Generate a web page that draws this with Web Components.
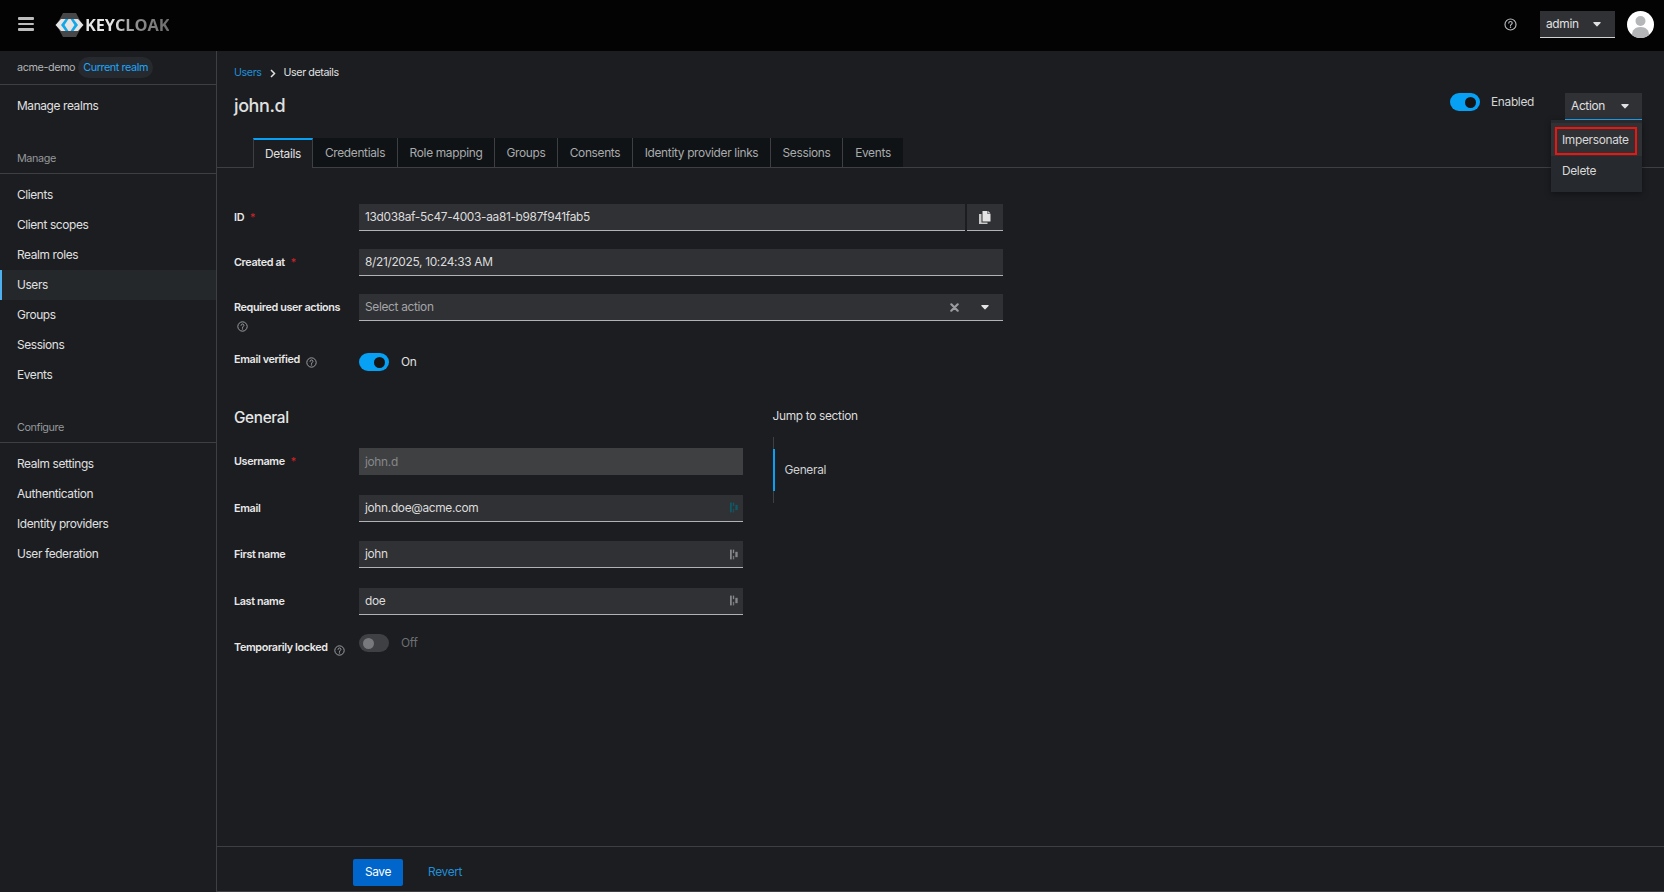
<!DOCTYPE html>
<html lang="en"><head><meta charset="utf-8"><title>Keycloak</title>
<style>
html,body{margin:0;height:892px;overflow:hidden;background:#1b1d21;color:#e0e0e0;font:11.9px/18px Inter,"Noto Sans",sans-serif;letter-spacing:-.32px}
</style></head><body>
<kc-app>
  <kc-header slot="header"></kc-header>
  <kc-sidebar slot="side">
    <kc-realm name="acme-demo" tag="Current realm"></kc-realm>
    <kc-nav-item first>Manage realms</kc-nav-item>
    <kc-nav-group title="Manage">
      <kc-nav-item>Clients</kc-nav-item><kc-nav-item>Client scopes</kc-nav-item><kc-nav-item>Realm roles</kc-nav-item>
      <kc-nav-item active>Users</kc-nav-item><kc-nav-item>Groups</kc-nav-item><kc-nav-item>Sessions</kc-nav-item><kc-nav-item>Events</kc-nav-item>
    </kc-nav-group>
    <kc-nav-group title="Configure">
      <kc-nav-item>Realm settings</kc-nav-item><kc-nav-item>Authentication</kc-nav-item><kc-nav-item>Identity providers</kc-nav-item><kc-nav-item>User federation</kc-nav-item>
    </kc-nav-group>
  </kc-sidebar>
  <kc-page slot="main">
    <kc-page-head></kc-page-head>
    <kc-tabs>
      <kc-tab active>Details</kc-tab><kc-tab w="85">Credentials</kc-tab><kc-tab w="97">Role mapping</kc-tab><kc-tab w="63">Groups</kc-tab><kc-tab w="75">Consents</kc-tab><kc-tab w="138">Identity provider links</kc-tab><kc-tab w="72">Sessions</kc-tab><kc-tab w="60">Events</kc-tab>
    </kc-tabs>
    <kc-form>
      <kc-field label="ID" req><kc-input value="13d038af-5c47-4003-aa81-b987f941fab5" copy></kc-input></kc-field>
      <kc-field label="Created at" req><kc-input value="8/21/2025, 10:24:33 AM"></kc-input></kc-field>
      <kc-field label="Required user actions" wraphelp h="41"><kc-input value="Select action" placeholder select></kc-input></kc-field>
      <kc-field label="Email verified" help switch><kc-switch on text="On"></kc-switch></kc-field>
      <kc-general>
        <kc-section-title>General</kc-section-title>
        <kc-field small label="Username" req><kc-input value="john.d" disabled></kc-input></kc-field>
        <kc-field small label="Email"><kc-input value="john.doe@acme.com" pm="teal"></kc-input></kc-field>
        <kc-field small label="First name"><kc-input value="john" pm="grey"></kc-input></kc-field>
        <kc-field small label="Last name"><kc-input value="doe" pm="grey"></kc-input></kc-field>
        <kc-field small label="Temporarily locked" help switch low><kc-switch text="Off"></kc-switch></kc-field>
        <kc-jump slot="aside" label="Jump to section" item="General"></kc-jump>
      </kc-general>
    </kc-form>
    <kc-footer></kc-footer>
  </kc-page>
</kc-app>
<script>
const ICON={
 help:s=>`<svg width="${s}" height="${s}" viewBox="0 0 16 16" fill="none" aria-hidden="true"><circle cx="8" cy="8" r="6.8" stroke="currentColor" stroke-width="1.4"/><path d="M5.9 6.3c0-1.2 1-2 2.1-2s2.1.8 2.1 1.9c0 1.7-2.1 1.6-2.1 3.3" stroke="currentColor" stroke-width="1.4" stroke-linecap="round"/><circle cx="8" cy="11.5" r=".95" fill="currentColor"/></svg>`,
 caret:()=>`<svg width="8" height="5" viewBox="0 0 9 6" aria-hidden="true"><path d="M0 .8C0 .3.3 0 .8 0h7.4c.5 0 .8.3.8.8 0 .2-.1.4-.2.5L5 5.2c-.3.3-.7.3-1 0L.2 1.3C.1 1.2 0 1 0 .8z" fill="currentColor"/></svg>`
};
function def(name,render){
  customElements.define(name,class extends HTMLElement{
    connectedCallback(){ if(this.shadowRoot) return; const r=this.attachShadow({mode:'open'}); r.innerHTML=render(this); }
  });
}
def('kc-app',()=>`<style>:host{display:flex;flex-direction:column;height:892px}
 .b{display:flex;flex:1;min-height:0}</style><slot name="header"></slot><div class="b"><slot name="side"></slot><slot name="main"></slot></div>`);
def('kc-header',()=>`<style>:host{display:flex;align-items:center;height:51px;background:#030303;padding:0 10px 0 18px;flex:none;box-sizing:border-box}
 .burger{display:flex;flex-direction:column;gap:3.2px;width:16px;margin-top:-3px}.burger i{display:block;height:2.6px;background:#bdbdbd;border-radius:1px}
 .logo{margin-left:21px;display:flex;align-items:center;margin-top:-2px}
 .t{font:700 16.400px/20px "Open Sans",sans-serif;margin-left:1px;letter-spacing:-.1px;background:linear-gradient(90deg,#e6e6e6 0 32%,#8f8f8f 60%,#6d6d6d);-webkit-background-clip:text;background-clip:text;color:transparent}
 .sp{flex:1}.help{color:#b8bbbe;display:flex;margin-right:23px;margin-top:-3px}
 .user{width:75px;height:27px;box-sizing:border-box;background:#303135;border-bottom:1px solid #d2d2d2;display:flex;align-items:center;padding:0 10px 0 6px;justify-content:space-between;margin-top:-2px;color:#e0e0e0}
 .user span{margin-right:auto}.user svg{margin-right:4px;color:#e0e0e0}
 .av{margin-left:12px;margin-top:-3px;display:flex}</style>
 <div class="burger"><i></i><i></i><i></i></div>
 <div class="logo"><svg width="29" height="24" viewBox="0 0 29 24" aria-hidden="true"><path d="M8 0h13l6.500 12L21 24H8L1.500 12z" fill="#47474a"/><path d="M6 6h17l5.500 6-5.500 6H6L.5 12z" fill="#e4e4e4"/><path d="M10.500 6 6 12l4.500 6h3L9.500 12l4-6zM18.500 6h-3l4 6-4 6h3L23 12z" fill="#12a7e8"/></svg><span class="t">KEYCLOAK</span></div>
 <div class="sp"></div><span class="help">${ICON.help(13)}</span>
 <div class="user"><span>admin</span>${ICON.caret()}</div>
 <div class="av"><svg width="27" height="27" viewBox="0 0 27 27" aria-hidden="true"><circle cx="13.500" cy="13.500" r="13.500" fill="#fff"/><circle cx="13.500" cy="10" r="5" fill="#b4b6b8"/><path d="M5 24c0-5 3-8 8.500-8S22 19 22 24c-2.300 2-5 3-8.500 3S7.300 26 5 24z" fill="#b4b6b8"/></svg></div>`);
def('kc-sidebar',()=>`<style>:host{display:block;width:217px;flex:none;box-sizing:border-box;border-right:1px solid #3d3f43;background:#1b1d21}</style><slot></slot>`);
def('kc-realm',e=>`<style>:host{display:flex;align-items:center;height:33px;box-sizing:content-box;border-bottom:1px solid #3d3f43;padding-left:17px;font-size:10.800px;letter-spacing:-.4px;color:#b3b5b7}
 b{font-weight:400;color:#1fa7f8;background:#26292e;border-radius:11px;padding:0 5px;margin-left:3px;height:21px;line-height:21px;white-space:nowrap}</style>${e.getAttribute('name')}<b>${e.getAttribute('tag')}</b>`);
def('kc-nav-item',e=>`<style>:host{display:flex;align-items:center;height:30px;padding-left:17px;box-sizing:border-box;color:#e0e0e0;letter-spacing:-.38px;position:relative;${e.hasAttribute('first')?'margin-top:6px;':''}${e.hasAttribute('active')?'background:#24282b;':''}}
 i{position:absolute;left:0;top:0;bottom:0;width:2px;background:#4fb0f0}</style>${e.hasAttribute('active')?'<i></i>':''}<slot></slot>`);
def('kc-nav-group',e=>`<style>:host{display:block;margin-top:22px}.h{height:30px;line-height:32px;padding-left:17px;border-bottom:1px solid #3d3f43;margin-bottom:6px;font-size:10.800px;letter-spacing:-.4px;color:#96989a}</style><div class="h">${e.getAttribute('title')}</div><slot></slot>`);
def('kc-page',()=>`<style>:host{display:flex;flex-direction:column;flex:1;min-width:0;position:relative}</style><slot></slot>`);
def('kc-page-head',()=>`<style>:host{display:block;padding:13px 22px 0 17px;flex:none}
 .bc{height:18px;font-size:10.700px;letter-spacing:-.4px;display:flex;align-items:center;color:#e0e0e0}.bc a{color:#1f8fd8}.bc svg{margin:0 8px 0 8px;color:#e0e0e0}
 .row{display:flex;margin-top:11px;height:27px}h1{margin:-1px 0 0;font:500 18px/27px Inter,sans-serif;letter-spacing:-.4px;color:#e0e0e0;flex:1}
 .en{display:flex;height:18px;margin-right:31px;align-items:center}.en span{margin-left:11px;color:#d4d5d6;}</style>
 <div class="bc"><a>Users</a><svg width="6" height="9" viewBox="0 0 6 9" fill="none" aria-hidden="true"><path d="M1 1l3.500 3.500L1 8" stroke="currentColor" stroke-width="1.500"/></svg>User details</div>
 <div class="row"><h1>john.d</h1><div class="en"><kc-switch on></kc-switch><span>Enabled</span></div><kc-dropdown label="Action"></kc-dropdown></div>`);
def('kc-dropdown',e=>`<style>:host{display:block;position:relative;width:77px}
 .b{height:27px;box-sizing:border-box;background:#303135;border-bottom:1px solid #1fa7f8;display:flex;align-items:center;padding:0 13px 0 6px;justify-content:space-between;color:#e0e0e0}
 .m{position:absolute;right:0;top:27px;width:91px;height:72px;box-sizing:border-box;background:#26292d;box-shadow:0 2px 6px #0006;z-index:5;padding:3px 0;}
 .i{height:26px;display:flex;align-items:center;padding-left:11px;color:#d8d8d8}
 .i.s{background:#303135;position:relative;height:33px;padding-top:1px;box-sizing:border-box}.i.s::after{content:"";position:absolute;left:4px;right:5px;top:4px;bottom:1px;border:2.500px solid #ee1410;box-sizing:border-box}
 .i+.i{margin-top:2px}</style>
 <div class="b"><span>${e.getAttribute('label')}</span>${ICON.caret()}</div>
 <div class="m"><div class="i s">Impersonate</div><div class="i">Delete</div></div>`);
def('kc-switch',e=>{const on=e.hasAttribute('on'),t=e.getAttribute('text');return `<style>:host{display:inline-flex;align-items:center}
 .t{width:30px;height:18px;border-radius:9px;background:${on?'#06a0f5':'#3e4043'};position:relative;flex:none}
 .k{position:absolute;top:3.500px;${on?'right:4px;background:#151515;':'left:4px;background:#77797c;'}width:11px;height:11px;border-radius:50%}
 span{margin-left:12px;color:${on?'#e0e0e0':'#6d6f72'};position:relative}</style><div class="t"><div class="k"></div></div>${t?`<span>${t}</span>`:''}`});
def('kc-tabs',()=>`<style>:host{display:flex;margin-top:18px;height:30px;box-sizing:border-box;border-bottom:1px solid #3d3f43;padding-left:36px;flex:none}</style><slot></slot>`);
def('kc-tab',e=>{const a=e.hasAttribute('active');return `<style>:host{display:flex;align-items:center;justify-content:center;box-sizing:border-box;height:30px;width:${e.getAttribute('w')||60}px;
 color:${a?'#e0e0e0':'#a9abad'};background:${a?'#1b1d21':'#101316'};border-right:1px solid #3d3f43;${a?'border-left:1px solid #3d3f43;border-top:2px solid #06a0f5;':'border-bottom:1px solid #3d3f43;'}}
 :host(:last-child){border-right:0}</style><slot></slot>`});
def('kc-form',()=>`<style>:host{display:flex;flex-direction:column;flex:1;min-height:0;gap:18px;padding:36px 0 0 17px}</style><slot></slot>`);
def('kc-field',e=>{const lab=e.getAttribute('label'),req=e.hasAttribute('req'),help=e.hasAttribute('help'),wh=e.hasAttribute('wraphelp'),sw=e.hasAttribute('switch'),low=e.hasAttribute('low');
 return `<style>:host{display:grid;grid-template-columns:125px ${e.hasAttribute('small')?'384px':'644px'};${e.getAttribute('h')?`height:${e.getAttribute('h')}px;`:''}}
 .l{font-weight:600;font-size:10.800px;letter-spacing:-.35px;line-height:18px;padding-top:5px;color:#e8e8e8;white-space:nowrap;${sw&&!low?'margin-top:-7px;':''}}
 .r{color:#d2232a;margin-left:6px;font-weight:400}.h{color:#9fa2a5;margin-left:6px;vertical-align:-2px}.hb{display:block;color:#9fa2a5;margin:0 0 0 3px;height:18px}
 .h svg,.hb svg{display:inline-block;vertical-align:middle}</style>
 <div class="l">${lab}${req?'<span class="r">*</span>':''}${help?`<span class="h">${ICON.help(11)}</span>`:''}${wh?`<span class="hb">${ICON.help(11)}</span>`:''}</div><div><slot></slot></div>`});
def('kc-input',e=>{const d=e.hasAttribute('disabled'),ph=e.hasAttribute('placeholder');const pm=e.getAttribute('pm');
 const pmc=pm==='teal'?'#0f5966':'#85878a';
 return `<style>:host{display:flex;height:27px}
 .f{flex:1;display:flex;align-items:center;box-sizing:border-box;padding:0 6px;height:27px;background:${d?'#3f4042':'#303135'};${d?'':'border-bottom:1.500px solid #b0b2b5;'}color:${d?'#86888a':ph?'#a3a5a7':'#dcdcdc'}}
 .v{flex:1;white-space:nowrap}.x{color:#9a9ca0;margin-right:22px;display:flex}.c{display:flex;color:#e4e4e4;margin-right:8px}
 .cp{width:36px;margin-left:2px;box-sizing:border-box;background:#303135;border-bottom:1.500px solid #b0b2b5;display:flex;align-items:center;justify-content:center;color:#e4e4e4}
 .pm{display:flex;margin-right:-1px}</style>
 <div class="f"><span class="v">${e.getAttribute('value')}</span>
 ${e.hasAttribute('select')?`<span class="x"><svg width="9" height="9" viewBox="0 0 9 9" aria-hidden="true"><path d="M1.300 1.300l6.400 6.400M7.700 1.300L1.300 7.700" stroke="currentColor" stroke-width="2.200" stroke-linecap="round"/></svg></span><span class="c">${ICON.caret()}</span>`:''}
 ${pm?`<span class="pm"><svg width="8" height="11" viewBox="0 0 9 11" aria-hidden="true"><rect x="0" y="0" width="2" height="11" fill="${pmc}"/><rect x="3.200" y="0" width="1.500" height="4" fill="${pmc}"/><rect x="3.200" y="7" width="1.500" height="4" fill="${pmc}" opacity=".8"/><rect x="6" y="2.500" width="2.600" height="6" fill="${pmc}"/></svg></span>`:''}</div>
 ${e.hasAttribute('copy')?`<div class="cp"><svg width="12" height="13" viewBox="0 0 12 13" aria-hidden="true"><path d="M3.500 0h5v3h3v7.500h-8z" fill="currentColor"/><path d="M9.200.1l2.300 2.300H9.200z" fill="currentColor"/><path d="M0 3h2.500v8.500h6V13H0z" fill="currentColor" opacity=".85"/></svg></div>`:''}`});
def('kc-general',()=>`<style>:host{display:flex;margin-top:13px}
 .l{width:509px;display:flex;flex-direction:column;gap:19.500px;flex:none}.a{margin-left:29.500px;margin-top:0}</style>
 <div class="l"><slot></slot></div><div class="a"><slot name="aside"></slot></div>`);
def('kc-section-title',()=>`<style>:host{display:block;font:500 15.300px/21.500px Inter,sans-serif;color:#e6e6e6;margin-bottom:0}</style><slot></slot>`);
def('kc-jump',e=>`<style>:host{display:block}.t{height:18px;color:#dcdcdc}.n{margin-top:12px;height:66px;border-left:1px solid #3d3f43;display:flex;align-items:center;position:relative;padding-left:11px;color:#cfd0d2}
 .n i{position:absolute;left:-1px;top:12px;height:42px;width:2px;background:#06a0f5}</style><div class="t">${e.getAttribute('label')}</div><div class="n"><i></i>${e.getAttribute('item')}</div>`);
def('kc-footer',()=>`<style>:host{display:flex;align-items:center;height:46px;box-sizing:border-box;border-top:1px solid #3d3f43;border-bottom:1px solid #3d3f43;padding:6px 0 0 136px;flex:none}
 .s{width:50px;height:27px;background:#0066cc;color:#fff;border-radius:2px;display:flex;align-items:center;justify-content:center}.r{margin-left:25px;color:#1f8fd8}</style><div class="s">Save</div><div class="r">Revert</div>`);
</script>
</body></html>
